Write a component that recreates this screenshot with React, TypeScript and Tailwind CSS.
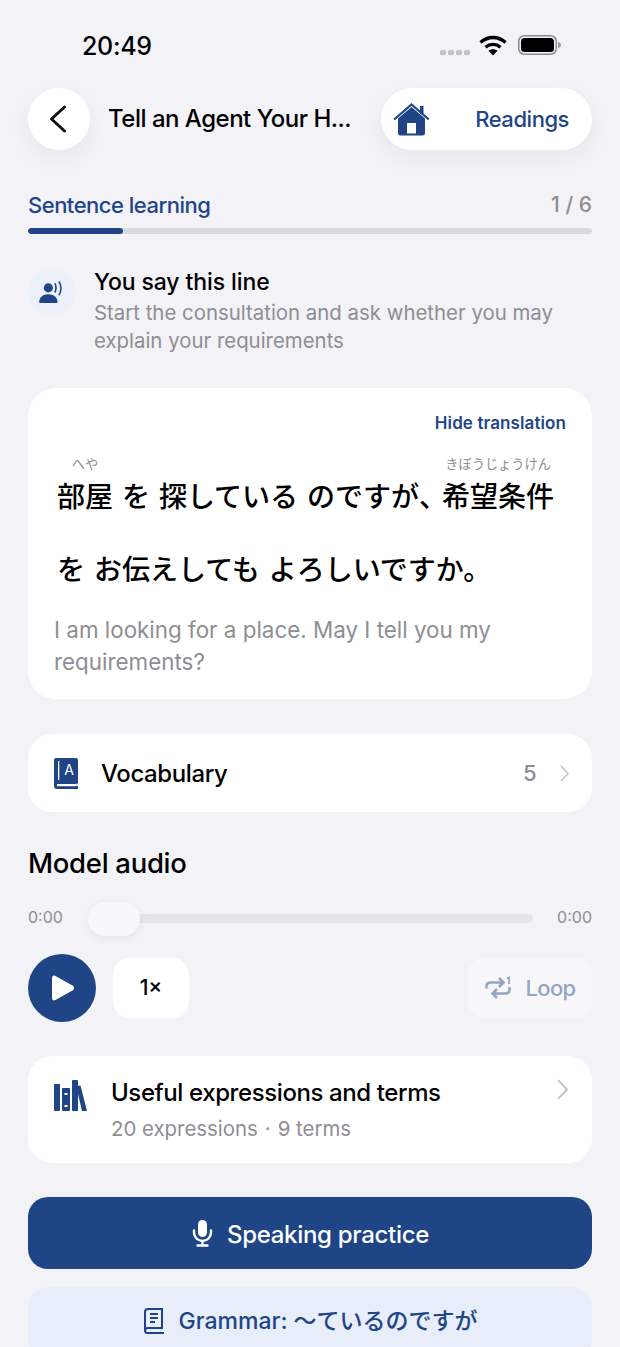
import React from "react";

const F = { fontFamily: 'Inter, "Noto Sans CJK JP", sans-serif' };
const B = "#1f4587";

function Ruby({ r, children }: { r?: string; children: React.ReactNode }) {
  return (
    <span className="relative inline-block">
      {r && (
        <span className="absolute left-[-20px] right-[-20px] top-[-4px] flex justify-center whitespace-nowrap text-[13.200px] leading-[14px] font-normal text-[#8e8e93] [word-spacing:0]">
          {r}
        </span>
      )}
      {children}
    </span>
  );
}

function Chevron({ h, color = "#c4c4c8" }: { h: number; color?: string }) {
  return (
    <svg width={h * 0.55} height={h} viewBox="0 0 11 20" fill="none" stroke={color} strokeWidth="1.800" strokeLinecap="round" strokeLinejoin="round">
      <path d="M1.500 1.500 9.500 10l-8 8.500" />
    </svg>
  );
}

export default function App() {
  return (
    <div style={F} className="flex h-[1347px] w-[620px] flex-col overflow-hidden bg-[#f2f2f7] px-7 text-black">
      {/* Status bar */}
      <div className="flex h-[88px] shrink-0 items-start justify-between pt-[31px]">
        <span className="ml-[54px] text-[25px] font-medium leading-[30px] tracking-[-0.3px]">20:49</span>
        <div className="mr-[28px] mt-[4px] flex w-[124px] items-start">
          <div className="mt-[15px] flex gap-[2.500px]">
            {[0, 1, 2, 3].map((i) => (
              <span key={i} className="h-[5px] w-[5.500px] rounded-[1.500px] bg-[#c4c4c8]" />
            ))}
          </div>
          <svg width="28" height="21" viewBox="0 0 28 21" className="ml-[9px]" fill="none">
            <path d="M1.500 7.500C9 .8 19 .8 26.500 7.500" stroke="#000" strokeWidth="3.400" />
            <path d="M6.500 12.300C11 8.500 17 8.500 21.500 12.300" stroke="#000" strokeWidth="3.200" />
            <path d="M14 20.500 9.500 15.800C12.200 13.800 15.800 13.800 18.500 15.800Z" fill="#000" />
          </svg>
          <svg width="44" height="20" viewBox="0 0 44 20" className="ml-[11px]" fill="none">
            <rect x="0.750" y="0.750" width="37.500" height="18.500" rx="5.500" stroke="#8a8a8e" strokeWidth="1.500" />
            <rect x="3" y="3" width="33" height="14" rx="3.500" fill="#000" />
            <path d="M40 7c1.800.4 3 1.500 3 3s-1.200 2.600-3 3z" fill="#9a9a9e" />
          </svg>
        </div>
      </div>

      {/* Header */}
      <div className="flex h-[62px] shrink-0 items-center">
        <div className="flex h-[62px] w-[62px] shrink-0 items-center justify-center rounded-full bg-white pr-[3px] shadow-[0_8px_24px_rgba(0,0,0,0.05)]">
          <svg width="18" height="28" viewBox="0 0 18 28" fill="none" stroke="#111" strokeWidth="3" strokeLinecap="round" strokeLinejoin="round">
            <path d="M15.500 2 2.500 14l13 12" />
          </svg>
        </div>
        <span className="ml-[18px] w-[245px] whitespace-nowrap text-[24px] font-medium leading-[30px] tracking-[-0.5px]">
          Tell an Agent Your H...
        </span>
        <div className="ml-auto flex h-[62px] w-[211px] items-center justify-between rounded-[31px] bg-white pl-[12px] pr-[23px] shadow-[0_8px_24px_rgba(0,0,0,0.05)]">
          <svg width="37" height="33" viewBox="0 0 37 33">
            <path d="M5 15.500 18.500 4 32 15.500V30a2.500 2.500 0 0 1-2.500 2.500h-22A2.500 2.500 0 0 1 5 30z" fill={B} />
            <path d="M1.200 16.500 18.500 1.500l17.300 15" stroke={B} strokeWidth="2.200" fill="none" />
            <rect x="27" y="3" width="3.500" height="8" fill={B} />
            <rect x="14" y="20" width="9" height="10.500" fill="#fff" />
          </svg>
          <span className="text-[22px] font-medium leading-[28px] tracking-[-0.45px] text-[#1f4587]">Readings</span>
        </div>
      </div>

      {/* Progress */}
      <div className="mt-[41px] flex shrink-0 items-center justify-between">
        <span className="text-[22px] font-medium leading-[28px] tracking-[-0.5px] text-[#1f4587]">Sentence learning</span>
        <span className="text-[21px] font-medium leading-[28px] text-[#8e8e93]">1 / 6</span>
      </div>
      <div className="mt-[9px] h-[6px] shrink-0 overflow-hidden rounded-full bg-[#d9d9e0]">
        <div className="h-full w-[95px] rounded-full bg-[#1f4587]" />
      </div>

      {/* Role */}
      <div className="mt-[34px] flex shrink-0 items-start">
        <div className="flex h-[48px] w-[48px] shrink-0 items-center justify-center rounded-full bg-[#ebf0f9]">
          <svg width="28" height="22" viewBox="0 0 28 24" fill={B}>
            <circle cx="10" cy="7.500" r="5" />
            <path d="M0 23c0-5 4-8.500 10-8.500S20 18 20 23c0 .6-.4 1-1 1H1c-.6 0-1-.4-1-1z" />
            <path d="M17 2.500c1.800 2.600 1.800 7.400 0 10M21.500.5c3 3.800 3 11.200 0 15" stroke={B} strokeWidth="1.700" fill="none" />
          </svg>
        </div>
        <div className="ml-[18px] mt-[-1px]">
          <div className="text-[23px] font-medium leading-[30px] tracking-[-0.1px]">You say this line</div>
          <div className="mt-[2px] text-[20.400px] leading-[28px] text-[#8e8e93]">
            Start the consultation and ask whether you may
            <br />
            explain your requirements
          </div>
        </div>
      </div>

      {/* Sentence card */}
      <div className="mt-[33px] h-[311px] shrink-0 rounded-[28px] bg-white px-[26px] pt-[24px]">
        <div className="text-right text-[17px] font-semibold leading-[22px] tracking-[0.1px] text-[#1f4587]">Hide translation</div>
        <div className="ml-[3px] mt-[27px] whitespace-nowrap text-[28px] font-medium leading-[73px] [word-spacing:1.500px]">
          <div>
            <Ruby r="へや">部屋</Ruby> を 探している のですが<span className="mr-[9px] [font-feature-settings:'halt']">、</span>
            <Ruby r="きぼうじょうけん">希望条件</Ruby>
          </div>
          <div>を お伝えしても よろしいですか。</div>
        </div>
        <div className="mt-[7px] text-[22.400px] leading-[31.500px] text-[#8e8e93]">
          I am looking for a place. May I tell you my
          <br />
          requirements?
        </div>
      </div>

      {/* Vocabulary */}
      <div className="mt-[35px] flex h-[78px] shrink-0 items-center rounded-[24px] bg-white pl-[26px] pr-[23px]">
        <svg width="24" height="31" viewBox="0 0 24 31">
          <path d="M2 0h20a2 2 0 0 1 2 2v23.500h-1.500V28H24v3H3a3 3 0 0 1-3-3V2a2 2 0 0 1 2-2z" fill={B} />
          <rect x="3" y="26" width="19.500" height="2.200" fill="#fff" />
          <rect x="4" y="3" width="1.300" height="19" fill="#fff" />
          <text x="15" y="17" textAnchor="middle" fontSize="14" fill="#fff" fontFamily="Inter">A</text>
        </svg>
        <span className="ml-[23px] pt-[1px] text-[24px] font-medium leading-[30px] tracking-[-0.4px]">Vocabulary</span>
        <span className="ml-auto text-[22px] font-medium text-[#8e8e93]">5</span>
        <span className="ml-[23px] flex">
          <Chevron h={17} />
        </span>
      </div>

      {/* Model audio */}
      <div className="mt-[34px] shrink-0 text-[27.500px] font-medium leading-[34px] tracking-[-0.3px]">Model audio</div>
      <div className="mt-[20px] flex h-[36px] shrink-0 items-center">
        <span className="mt-[-2px] text-[16px] leading-[20px] text-[#8e8e93]">0:00</span>
        <div className="relative ml-[25px] h-[9px] w-[445px] rounded-full bg-[#e4e4ea]">
          <div className="absolute left-0 top-[-12px] h-[34px] w-[52px] rounded-[17px] bg-[#f8f8fa] shadow-[0_3px_8px_rgba(0,0,0,0.06)]" />
        </div>
        <span className="ml-auto mt-[-2px] text-[16px] leading-[20px] text-[#8e8e93]">0:00</span>
      </div>
      <div className="mt-[18px] flex h-[68px] shrink-0 items-center">
        <div className="flex h-[68px] w-[68px] items-center justify-center rounded-full bg-[#1f4587]">
          <svg width="24" height="26" viewBox="0 0 24 26" className="ml-[2px]">
            <path d="M1 3c0-2 1.500-3 3.500-2l17 9.500c2 1.200 2 3.800 0 5L4.500 25c-2 1-3.500 0-3.500-2z" fill="#fff" />
          </svg>
        </div>
        <div className="ml-[17px] flex h-[60px] w-[76px] items-center justify-center rounded-[16px] bg-white text-[21px] font-medium">1×</div>
        <div className="ml-auto flex h-[60px] w-[124px] items-center justify-center gap-[14px] rounded-[16px] bg-[#f7f7fa] pl-[1px] text-[22px] font-medium tracking-[-0.6px] text-[#93a5c4]">
          <svg width="26" height="24" viewBox="0 0 26 24" fill="none" stroke="#93a5c4" strokeWidth="2.600">
            <path d="M1.500 12.500V10A3.500 3.500 0 0 1 5 6.500h13M14 2l4.500 4.500L14 11" />
            <path d="M24.500 11v3a3.500 3.500 0 0 1-3.500 3.500H8M12 13l-4.500 4.500L12 22" />
            <path d="M22 2.500 24 1.500V8" strokeWidth="1.800" />
          </svg>
          Loop
        </div>
      </div>

      {/* Expressions */}
      <div className="mt-[34px] flex h-[107px] shrink-0 items-start rounded-[24px] bg-white pl-[26px] pr-[23px] pt-[21px]">
        <svg width="33" height="31" viewBox="0 0 33 31" className="mt-[3px]" fill={B}>
          <rect x="0" y="4" width="6" height="27" rx="1" />
          <path d="M8 9a1 1 0 0 1 1-1h6a1 1 0 0 1 1 1v21a1 1 0 0 1-1 1H9a1 1 0 0 1-1-1z" />
          <path d="M18 1a1 1 0 0 1 1-1h4a1 1 0 0 1 1 1v5l1.500-.500a1 1 0 0 1 1.200.800L33 31h-5l-4-17v17h-5a1 1 0 0 1-1-1z" />
          <rect x="10.500" y="13" width="3" height="2" fill="#fff" />
          <rect x="10.500" y="25" width="3" height="2" fill="#fff" />
        </svg>
        <div className="ml-[24px]">
          <div className="text-[24px] font-medium leading-[32px] tracking-[-0.4px]">Useful expressions and terms</div>
          <div className="mt-[6px] text-[20.400px] leading-[28px] text-[#8e8e93]">
            20 expressions<span className="mx-[7px]">·</span>9 terms
          </div>
        </div>
        <span className="ml-auto mt-[2px] flex">
          <Chevron h={21} />
        </span>
      </div>

      {/* Buttons */}
      <div className="mt-[34px] flex h-[72px] shrink-0 items-center justify-center gap-[14px] rounded-[20px] bg-[#1f4587] pl-[1px] text-[24px] font-medium tracking-[-0.3px] text-white">
        <svg width="21" height="28" viewBox="0 0 21 28" fill="none" stroke="#fff" strokeWidth="2.400" strokeLinecap="round">
          <rect x="6" y="1" width="9" height="17" rx="4.500" fill="#fff" stroke="none" />
          <path d="M2 11.500v2a8.500 8.500 0 0 0 17 0v-2M10.500 22v4.500M5.500 26.500h10" />
        </svg>
        <span className="pt-[3px]">Speaking practice</span>
      </div>
      <div className="mt-[18px] flex h-[72px] shrink-0 items-center justify-center gap-[14px] rounded-[20px] bg-[#e7eef9] pb-[4px] text-[23px] font-medium text-[#1f4587]">
        <svg width="22" height="26" viewBox="0 0 22 26" fill="none" stroke={B} strokeWidth="2">
          <path d="M2 22V4a3 3 0 0 1 3-3h14v19H5a3 3 0 0 0-3 2.500A2.500 2.500 0 0 0 4.500 25H21" />
          <path d="M7 6h8M7 10h8M7 14h5" />
        </svg>
        Grammar: ～ているのですが
      </div>
    </div>
  );
}
